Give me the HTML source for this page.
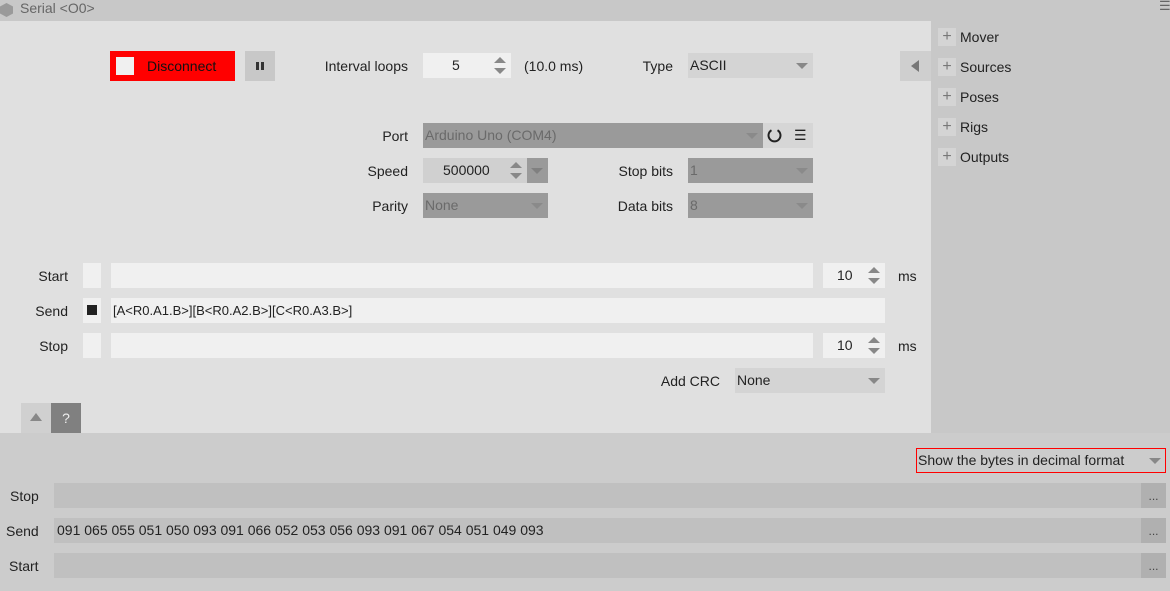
<!DOCTYPE html>
<html><head><style>
*{margin:0;padding:0;box-sizing:border-box}
body{width:1170px;height:591px;overflow:hidden;background:#cccccc;font-family:"Liberation Sans",sans-serif;font-size:14px;color:#222;position:relative}
.a{position:absolute}
.lbl{position:absolute;text-align:right;line-height:25px;height:25px}
.dd{position:absolute;width:0;height:0;border-left:6px solid transparent;border-right:6px solid transparent;border-top:6px solid #888}
.up{position:absolute;width:0;height:0;border-left:6px solid transparent;border-right:6px solid transparent;border-bottom:6px solid #888}
.dn{position:absolute;width:0;height:0;border-left:6px solid transparent;border-right:6px solid transparent;border-top:6px solid #888}
.t{position:absolute;line-height:25px;height:25px;white-space:nowrap}
</style></head><body>
<!-- title bar -->
<div class="a" style="left:0;top:0;width:1170px;height:21px;background:#c8c8c8"></div>
<div class="a" style="left:0;top:3px;width:13px;height:14px;background:#9a9a9a;clip-path:polygon(50% 0,100% 25%,100% 75%,50% 100%,0 75%,0 25%)"></div>
<div class="a" style="left:20px;top:0;line-height:16px;color:#666;font-size:14px">Serial &lt;O0&gt;</div>
<div class="a" style="left:1159px;top:0;color:#666;font-size:13px;line-height:12px">☰</div>
<!-- main panel -->
<div class="a" style="left:0;top:21px;width:931px;height:412px;background:#e0e0e0"></div>
<div class="a" style="left:931px;top:21px;width:239px;height:412px;background:#c8c8c8"></div>

<div class="a" style="left:110px;top:51px;width:125px;height:30px;background:#ff0000"></div>
<div class="a" style="left:116px;top:57px;width:18px;height:18px;background:#f0f0f0"></div>
<div class="t" style="left:147px;top:54px;color:#111">Disconnect</div>
<div class="a" style="left:245px;top:51px;width:30px;height:30px;background:#c8c8c8"></div>
<div class="a" style="left:256px;top:62px;width:3px;height:8px;background:#333"></div>
<div class="a" style="left:261px;top:62px;width:3px;height:8px;background:#333"></div>

<div class="lbl" style="left:300px;width:108px;top:54px">Interval loops</div>
<div class="a" style="left:423px;top:53px;width:88px;height:25px;background:#f0f0f0"></div>
<div class="t" style="left:452px;top:53px">5</div>
<div class="up" style="left:494px;top:57px"></div><div class="dn" style="left:494px;top:68px"></div>
<div class="t" style="left:524px;top:54px">(10.0 ms)</div>
<div class="lbl" style="left:600px;width:73px;top:54px">Type</div>
<div class="a" style="left:688px;top:53px;width:125px;height:25px;background:#d4d4d4"></div>
<div class="t" style="left:690px;top:53px">ASCII</div>
<div class="dd" style="left:796px;top:63px"></div>
<div class="a" style="left:900px;top:51px;width:31px;height:30px;background:#cfcfcf"></div>
<div class="a" style="left:911px;top:60px;width:0;height:0;border-top:6px solid transparent;border-bottom:6px solid transparent;border-right:8px solid #777"></div>

<!-- right list -->
<div class="a" style="left:938px;top:28px;width:18px;height:18px;background:#d4d4d4;color:#777;text-align:center;line-height:17px;font-size:16px">+</div><div class="t" style="left:960px;top:25px">Mover</div>
<div class="a" style="left:938px;top:58px;width:18px;height:18px;background:#d4d4d4;color:#777;text-align:center;line-height:17px;font-size:16px">+</div><div class="t" style="left:960px;top:55px">Sources</div>
<div class="a" style="left:938px;top:88px;width:18px;height:18px;background:#d4d4d4;color:#777;text-align:center;line-height:17px;font-size:16px">+</div><div class="t" style="left:960px;top:85px">Poses</div>
<div class="a" style="left:938px;top:118px;width:18px;height:18px;background:#d4d4d4;color:#777;text-align:center;line-height:17px;font-size:16px">+</div><div class="t" style="left:960px;top:115px">Rigs</div>
<div class="a" style="left:938px;top:148px;width:18px;height:18px;background:#d4d4d4;color:#777;text-align:center;line-height:17px;font-size:16px">+</div><div class="t" style="left:960px;top:145px">Outputs</div>

<!-- port -->
<div class="lbl" style="left:300px;width:108px;top:124px">Port</div>
<div class="a" style="left:423px;top:123px;width:340px;height:25px;background:#9a9a9a"></div>
<div class="t" style="left:425px;top:123px;color:#6a6a6a">Arduino Uno (COM4)</div>
<div class="dd" style="left:746px;top:133px;border-top-color:#8a8a8a"></div>
<div class="a" style="left:763px;top:123px;width:50px;height:25px;background:#d6d6d6"></div>
<svg class="a" style="left:766px;top:127px" width="17" height="17" viewBox="0 0 17 17"><path d="M5.5 3.2A6 6 0 1 0 11.5 3.2" fill="none" stroke="#222" stroke-width="2"/></svg>
<div class="a" style="left:794px;top:123px;line-height:25px;font-size:14px">☰</div>

<div class="lbl" style="left:300px;width:108px;top:159px">Speed</div>
<div class="a" style="left:423px;top:158px;width:104px;height:25px;background:#d0d0d0"></div>
<div class="t" style="left:443px;top:158px">500000</div>
<div class="up" style="left:510px;top:162px"></div><div class="dn" style="left:510px;top:173px"></div>
<div class="a" style="left:527px;top:158px;width:21px;height:25px;background:#9a9a9a"></div>
<div class="dd" style="left:531px;top:168px;border-top-color:#808080"></div>
<div class="lbl" style="left:580px;width:93px;top:159px">Stop bits</div>
<div class="a" style="left:688px;top:158px;width:125px;height:25px;background:#9a9a9a"></div>
<div class="t" style="left:690px;top:158px;color:#6a6a6a">1</div>
<div class="dd" style="left:796px;top:168px;border-top-color:#8a8a8a"></div>

<div class="lbl" style="left:300px;width:108px;top:194px">Parity</div>
<div class="a" style="left:423px;top:193px;width:125px;height:25px;background:#9a9a9a"></div>
<div class="t" style="left:425px;top:193px;color:#6a6a6a">None</div>
<div class="dd" style="left:531px;top:203px;border-top-color:#8a8a8a"></div>
<div class="lbl" style="left:580px;width:93px;top:194px">Data bits</div>
<div class="a" style="left:688px;top:193px;width:125px;height:25px;background:#9a9a9a"></div>
<div class="t" style="left:690px;top:193px;color:#6a6a6a">8</div>
<div class="dd" style="left:796px;top:203px;border-top-color:#8a8a8a"></div>

<!-- start/send/stop -->
<div class="lbl" style="left:0;width:68px;top:264px">Start</div>
<div class="a" style="left:83px;top:263px;width:18px;height:25px;background:#f0f0f0"></div>
<div class="a" style="left:111px;top:263px;width:702px;height:25px;background:#f0f0f0"></div>
<div class="a" style="left:823px;top:263px;width:62px;height:25px;background:#f0f0f0"></div>
<div class="t" style="left:837px;top:263px">10</div>
<div class="up" style="left:868px;top:267px"></div><div class="dn" style="left:868px;top:278px"></div>
<div class="t" style="left:898px;top:264px">ms</div>

<div class="lbl" style="left:0;width:68px;top:299px">Send</div>
<div class="a" style="left:83px;top:298px;width:18px;height:25px;background:#f0f0f0"></div>
<div class="a" style="left:87px;top:305px;width:10px;height:10px;background:#222"></div>
<div class="a" style="left:111px;top:298px;width:774px;height:25px;background:#f0f0f0"></div>
<div class="t" style="left:113px;top:298px;font-size:13px">[A&lt;R0.A1.B&gt;][B&lt;R0.A2.B&gt;][C&lt;R0.A3.B&gt;]</div>

<div class="lbl" style="left:0;width:68px;top:334px">Stop</div>
<div class="a" style="left:83px;top:333px;width:18px;height:25px;background:#f0f0f0"></div>
<div class="a" style="left:111px;top:333px;width:702px;height:25px;background:#f0f0f0"></div>
<div class="a" style="left:823px;top:333px;width:62px;height:25px;background:#f0f0f0"></div>
<div class="t" style="left:837px;top:333px">10</div>
<div class="up" style="left:868px;top:337px"></div><div class="dn" style="left:868px;top:348px"></div>
<div class="t" style="left:898px;top:334px">ms</div>

<div class="lbl" style="left:600px;width:120px;top:369px">Add CRC</div>
<div class="a" style="left:735px;top:368px;width:150px;height:25px;background:#d4d4d4"></div>
<div class="t" style="left:737px;top:368px">None</div>
<div class="dd" style="left:868px;top:378px"></div>

<div class="a" style="left:21px;top:403px;width:30px;height:30px;background:#d0d0d0"></div>
<div class="up" style="left:30px;top:413px;border-bottom-width:8px;border-bottom-color:#888"></div>
<div class="a" style="left:51px;top:403px;width:30px;height:30px;background:#808080;color:#eee;text-align:center;line-height:30px;font-size:14px">?</div>

<!-- bottom -->
<div class="a" style="left:916px;top:448px;width:250px;height:25px;border:1px solid #ff0000"></div>
<div class="t" style="left:918px;top:448px;font-size:14px">Show the bytes in decimal format</div>
<div class="dd" style="left:1149px;top:458px"></div>

<div class="t" style="left:10px;top:484px">Stop</div>
<div class="a" style="left:54px;top:483px;width:1087px;height:25px;background:#c0c0c0"></div>
<div class="a" style="left:1141px;top:483px;width:25px;height:25px;background:#b0b0b0;text-align:center;line-height:27px;color:#444;font-size:12px">...</div>
<div class="t" style="left:6px;top:519px">Send</div>
<div class="a" style="left:54px;top:518px;width:1087px;height:25px;background:#c0c0c0"></div>
<div class="t" style="left:57px;top:518px">091 065 055 051 050 093 091 066 052 053 056 093 091 067 054 051 049 093</div>
<div class="a" style="left:1141px;top:518px;width:25px;height:25px;background:#b0b0b0;text-align:center;line-height:27px;color:#444;font-size:12px">...</div>
<div class="t" style="left:9px;top:554px">Start</div>
<div class="a" style="left:54px;top:553px;width:1087px;height:25px;background:#c0c0c0"></div>
<div class="a" style="left:1141px;top:553px;width:25px;height:25px;background:#b0b0b0;text-align:center;line-height:27px;color:#444;font-size:12px">...</div>
</body></html>
